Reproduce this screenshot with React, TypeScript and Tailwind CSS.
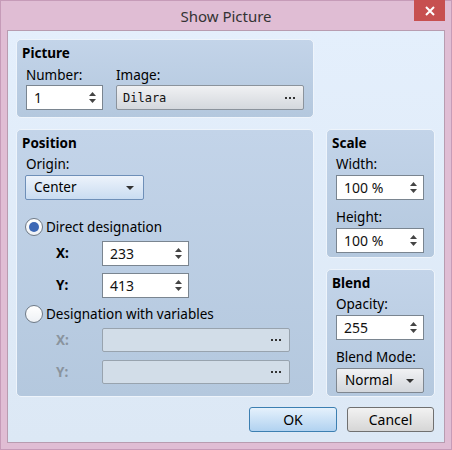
import React from 'react';

const font = { fontFamily: '"Noto Sans", "DejaVu Sans", sans-serif' };

function Spin({ value, w }: { value: string; w: string }) {
  return (
    <div className={`${w} h-[25px] bg-white border border-[#7a8590] flex items-center pl-[7px] pr-[6px]`}>
      <span className="flex-1 text-[14px] text-[#111] leading-none">{value}</span>
      <svg width="7" height="13" viewBox="0 0 7 13">
        <path d="M3.5 1 L7 5 L0 5 Z" fill="#444" />
        <path d="M0 8 L7 8 L3.5 12 Z" fill="#444" />
      </svg>
    </div>
  );
}

function Group({ title, className, children }: { title: string; className: string; children?: React.ReactNode }) {
  return (
    <div className={`rounded-[5px] border border-[#eef4fb] bg-gradient-to-b from-[#c3d4e9] to-[#b4c8de] pl-[5px] pr-[9px] ${className}`}>
      <div className="mt-[5px] h-[16px] leading-[16px] text-[13.5px] font-bold text-black">{title}</div>
      {children}
    </div>
  );
}

function Label({ children, className = '' }: { children: string; className?: string }) {
  return <div className={`h-[16px] leading-[16px] text-[13.5px] text-black ${className}`}>{children}</div>;
}

function Radio({ checked, label, className = '' }: { checked: boolean; label: string; className?: string }) {
  return (
    <div className={`flex items-center ${className}`}>
      <div className="w-[18px] h-[18px] rounded-full border border-[#6f7a86] bg-gradient-to-b from-white to-[#eef1f5] flex items-center justify-center">
        {checked && <div className="w-[10px] h-[10px] rounded-full bg-[#3d68b5]" />}
      </div>
      <span className="ml-[3px] text-[13.5px] leading-[16px] text-black">{label}</span>
    </div>
  );
}

function Dots() {
  return (
    <svg width="10" height="2" viewBox="0 0 10 2">
      <rect x="0" y="0" width="2" height="2" fill="#333" />
      <rect x="4" y="0" width="2" height="2" fill="#333" />
      <rect x="8" y="0" width="2" height="2" fill="#333" />
    </svg>
  );
}

export default function App() {
  return (
    <div className="w-[452px] h-[450px] bg-[#e0bdd4] border border-[#c69bb8] flex flex-col" style={font}>
      <div className="h-[29px] flex relative">
        <div className="flex-1 flex items-center justify-center text-[15px] text-[#333] pt-[1px]">Show Picture</div>
        <div className="absolute right-[6px] top-[-1px] w-[31px] h-[21px] bg-[#c75050] flex items-center justify-center">
          <svg width="10" height="10" viewBox="0 0 10 10">
            <path d="M1 1 L9 9 M9 1 L1 9" stroke="white" strokeWidth="2" />
          </svg>
        </div>
      </div>
      <div className="ml-[6px] w-[438px] h-[413px] border border-[#b89cb0] bg-gradient-to-b from-[#e4effc] to-[#dce8f5] pl-[8px] pt-[8px] flex flex-col">
        <div className="flex gap-[12px]">
          <div className="flex flex-col w-[298px]">
            <Group title="Picture" className="h-[79px]">
              <div className="flex mt-[6px] pl-[4px]">
                <div className="flex flex-col w-[90px]">
                  <Label>Number:</Label>
                  <div className="mt-[2px]"><Spin value="1" w="w-[77px]" /></div>
                </div>
                <div className="flex flex-col">
                  <Label>Image:</Label>
                  <div className="mt-[2px] w-[188px] h-[25px] rounded-[2px] border border-[#8b939c] bg-gradient-to-b from-[#f0f1f3] to-[#d4d8dd] flex items-center pl-[6px] pr-[8px]">
                    <span className="flex-1 text-[12px] text-[#111]" style={{ fontFamily: '"DejaVu Sans Mono", "Liberation Mono", monospace' }}>Dilara</span>
                    <Dots />
                  </div>
                </div>
              </div>
            </Group>
            <Group title="Position" className="mt-[11px] h-[268px]">
              <div className="pl-[4px]">
                <Label className="mt-[5px]">Origin:</Label>
                <div className="mt-[3px] ml-[-1px] w-[119px] h-[25px] rounded-[2px] border border-[#6e8fb8] bg-gradient-to-b from-[#edf3fb] to-[#c9dcf1] flex items-center pl-[8px] pr-[9px]">
                  <span className="flex-1 text-[13.5px] text-black">Center</span>
                  <svg width="8" height="4" viewBox="0 0 8 4"><path d="M0 0 L8 0 L4 4 Z" fill="#333" /></svg>
                </div>
                <Radio checked label="Direct designation" className="mt-[18px] ml-[-1px]" />
                <div className="flex items-center mt-[5px]">
                  <span className="w-[76px] pl-[30px] text-[13.5px] font-bold text-black">X:</span>
                  <Spin value="233" w="w-[87px]" />
                </div>
                <div className="flex items-center mt-[7px]">
                  <span className="w-[76px] pl-[30px] text-[13.5px] font-bold text-black">Y:</span>
                  <Spin value="413" w="w-[87px]" />
                </div>
                <Radio checked={false} label="Designation with variables" className="mt-[7px] ml-[-1px]" />
                <div className="flex items-center mt-[5px]">
                  <span className="w-[76px] pl-[30px] text-[13.5px] font-bold text-[#8a949e]">X:</span>
                  <div className="w-[188px] h-[24px] rounded-[2px] border border-[#98a3ae] bg-[#d2dde8] flex items-center justify-end pr-[8px]"><Dots /></div>
                </div>
                <div className="flex items-center mt-[8px]">
                  <span className="w-[76px] pl-[30px] text-[13.5px] font-bold text-[#8a949e]">Y:</span>
                  <div className="w-[188px] h-[24px] rounded-[2px] border border-[#98a3ae] bg-[#d2dde8] flex items-center justify-end pr-[8px]"><Dots /></div>
                </div>
              </div>
            </Group>
          </div>
          <div className="flex flex-col w-[109px] pt-[90px]">
            <Group title="Scale" className="h-[129px]">
              <div className="pl-[4px]">
                <Label className="mt-[5px]">Width:</Label>
                <div className="mt-[3px]"><Spin value="100 %" w="w-[88px]" /></div>
                <Label className="mt-[9px]">Height:</Label>
                <div className="mt-[3px]"><Spin value="100 %" w="w-[88px]" /></div>
              </div>
            </Group>
            <Group title="Blend" className="mt-[11px] h-[128px]">
              <div className="pl-[4px]">
                <Label className="mt-[5px]">Opacity:</Label>
                <div className="mt-[3px]"><Spin value="255" w="w-[88px]" /></div>
                <Label className="mt-[9px]">Blend Mode:</Label>
                <div className="mt-[3px] w-[88px] h-[25px] rounded-[2px] border border-[#7f8790] bg-gradient-to-b from-[#f1f2f4] to-[#d3d7dc] flex items-center pl-[8px] pr-[9px]">
                  <span className="flex-1 text-[13.5px] text-black">Normal</span>
                  <svg width="8" height="4" viewBox="0 0 8 4"><path d="M0 0 L8 0 L4 4 Z" fill="#333" /></svg>
                </div>
              </div>
            </Group>
          </div>
        </div>
        <div className="flex justify-end gap-[10px] mt-[10px] pr-[10px]">
          <div className="w-[88px] h-[25px] rounded-[3px] border border-[#3c7fb1] bg-gradient-to-b from-[#e5f1fc] to-[#b1d2f0] flex items-center justify-center text-[14px] text-black">OK</div>
          <div className="w-[87px] h-[25px] rounded-[3px] border border-[#707070] bg-gradient-to-b from-[#f2f2f2] to-[#d6d6d6] flex items-center justify-center text-[14px] text-black">Cancel</div>
        </div>
      </div>
    </div>
  );
}
